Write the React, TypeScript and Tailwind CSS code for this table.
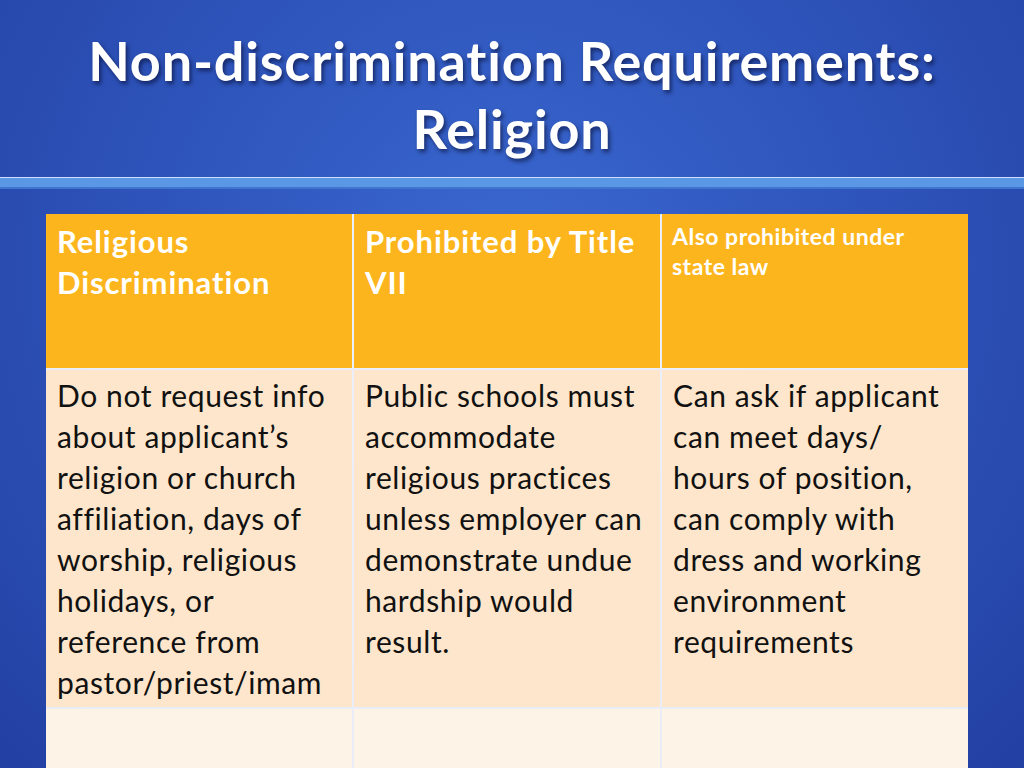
import React from "react";

const font = { fontFamily: "Lato, 'Open Sans', sans-serif" };

const Lines = ({ lines }: { lines: string[] }) => (
  <>
    {lines.map((l) => (
      <div key={l} className="whitespace-nowrap">
        {l}
      </div>
    ))}
  </>
);

const HeaderCell = ({ lines, small }: { lines: string[]; small?: boolean }) => (
  <div
    className={
      small
        ? "bg-[#fdb51d] px-[10px] pt-[7px] text-[23px] leading-[30px] font-bold tracking-[0.5px] text-white"
        : "bg-[#fdb51d] px-[11px] pt-[7px] text-[31px] leading-[41px] font-bold tracking-[0.9px] text-white"
    }
  >
    <Lines lines={lines} />
  </div>
);

const BodyCell = ({ lines }: { lines: string[] }) => (
  <div className="bg-[#fde6cb] px-[11px] pt-[5px] text-[30px] leading-[41px] tracking-[0.6px] text-[#111]">
    <Lines lines={lines} />
  </div>
);

const EmptyCell = () => <div className="bg-[#fef3e7]" />;

export default function App() {
  return (
    <div
      className="relative flex h-[768px] w-[1024px] flex-col overflow-hidden bg-[radial-gradient(ellipse_at_50%_35%,#3a68cf_0%,#2f56bd_45%,#2340a3_100%)]"
      style={font}
    >
      <h1 className="flex h-[177px] shrink-0 flex-col items-center pt-[27px] text-center text-[54px] leading-[68px] font-bold tracking-[0.8px] text-white [text-shadow:2px_3px_4px_rgba(0,0,30,0.55)]">
        <span>Non-discrimination Requirements:</span>
        <span>Religion</span>
      </h1>
      <div className="h-[1px] shrink-0 bg-[#cfe0ff]" />
      <div className="h-[9px] shrink-0 bg-[#5a98e6]" />
      <div className="h-[2px] shrink-0 bg-[#3f74cf]" />

      <div className="ml-[46px] mt-[25px] grid w-[922px] shrink-0 grid-cols-3 grid-rows-[154px_337px_120px] gap-[2px] bg-white/90">
        <HeaderCell lines={["Religious", "Discrimination"]} />
        <HeaderCell lines={["Prohibited by Title", "VII"]} />
        <HeaderCell small lines={["Also prohibited under", "state law"]} />

        <BodyCell
          lines={[
            "Do not request info",
            "about applicant’s",
            "religion or church",
            "affiliation, days of",
            "worship, religious",
            "holidays, or",
            "reference from",
            "pastor/priest/imam",
          ]}
        />
        <BodyCell
          lines={[
            "Public schools must",
            "accommodate",
            "religious practices",
            "unless employer can",
            "demonstrate undue",
            "hardship would",
            "result.",
          ]}
        />
        <BodyCell
          lines={[
            "Can ask if applicant",
            "can meet days/",
            "hours of position,",
            "can comply with",
            "dress and working",
            "environment",
            "requirements",
          ]}
        />

        <EmptyCell />
        <EmptyCell />
        <EmptyCell />
      </div>
    </div>
  );
}
